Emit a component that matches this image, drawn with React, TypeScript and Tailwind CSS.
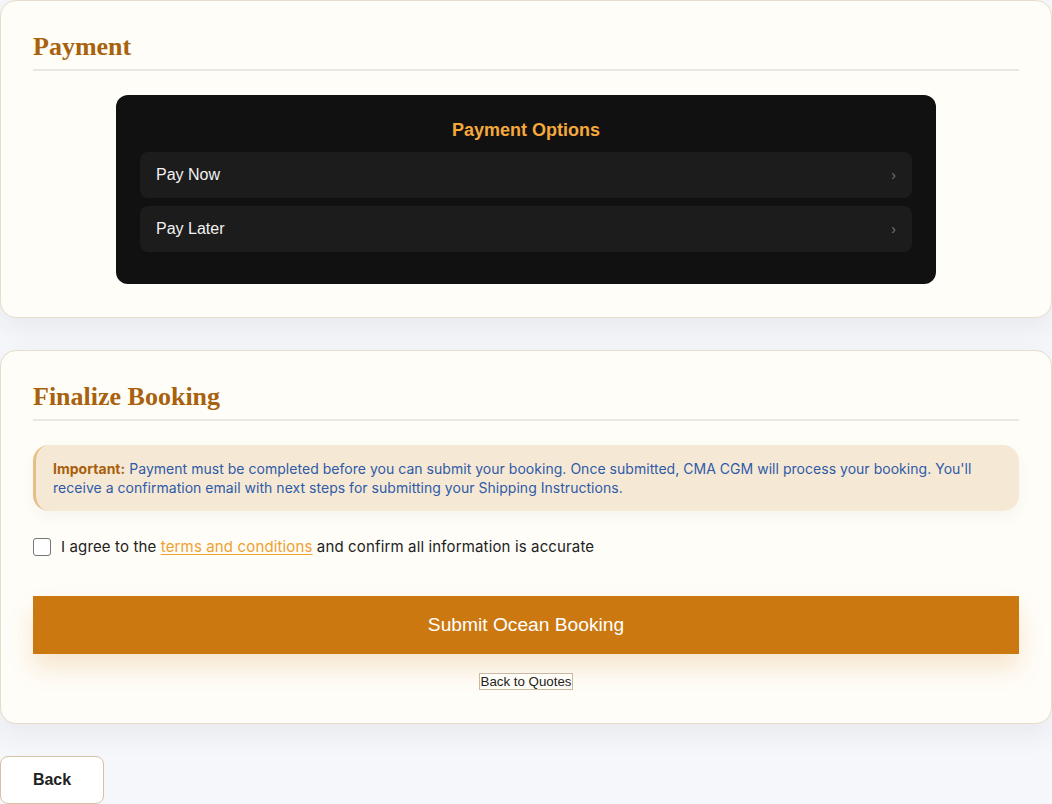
const serif = { fontFamily: '"Liberation Serif", "Times New Roman", serif' };

function SectionCard({
  title,
  className,
  children,
}: {
  title: string;
  className: string;
  children: React.ReactNode;
}) {
  return (
    <section
      className={`rounded-2xl border border-[#e6dccb] bg-[#fffdf8] px-8 pt-8 shadow-[0_10px_28px_rgba(30,40,60,0.07)] ${className}`}
    >
      <h2
        className="border-b-2 border-[#ebe7df] pb-2 text-[26px] leading-[28px] font-bold text-[#a8620e]"
        style={serif}
      >
        {title}
      </h2>
      {children}
    </section>
  );
}

export default function App() {
  const options = ["Pay Now", "Pay Later"];

  return (
    <div className="min-h-[804px] bg-[#f6f7fb] font-['Inter',sans-serif]">
      <div className="flex flex-col gap-8">
        <SectionCard title="Payment" className="pb-[32.5px]">
          <div className="mx-auto mt-6 max-w-[820px] rounded-xl bg-[#111111] px-6 pt-[23px] pb-8 font-['Liberation_Sans',Arial,sans-serif]">
            <h3 className="mb-[10px] text-center text-[18px] leading-[24px] font-bold text-[#f5a83c]">
              Payment Options
            </h3>
            <div className="flex flex-col gap-2">
              {options.map((o) => (
                <button
                  key={o}
                  className="flex h-[46px] items-center justify-between rounded-lg bg-[#1c1c1c] pr-[16px] pl-4 text-left text-[16px] text-[#f2f2f2]"
                >
                  <span>{o}</span>
                  <span className="text-[14px] text-[#777]">›</span>
                </button>
              ))}
            </div>
          </div>
        </SectionCard>

        <SectionCard title="Finalize Booking" className="pb-[33px]">
          <div className="mt-6 rounded-2xl border-l-[3px] border-[#e6bf88] bg-[#f5e9d5] py-[14px] pr-5 pl-[17px] text-[14px] leading-[19px] tracking-[0.03px] text-[#2f5aa8] shadow-[0_6px_16px_rgba(0,0,0,0.04)]">
            <strong className="font-bold text-[#a8600c]">Important:</strong> Payment must be completed before you can
            submit your booking. Once submitted, CMA CGM will process your booking. You'll receive a confirmation email
            with next steps for submitting your Shipping Instructions.
          </div>

          <label className="mt-[25px] flex items-center gap-[10px] text-[15px] tracking-[0.14px] text-[#222]">
            <span className="h-[18px] w-[18px] rounded-[3px] border border-[#767676] bg-white" />
            <span>
              I agree to the{" "}
              <a className="text-[#f0a030] underline underline-offset-2">terms and conditions</a> and confirm all
              information is accurate
            </span>
          </label>

          <button className="mt-[38px] h-[58px] w-full bg-[#cb7811] font-['Liberation_Sans',Arial,sans-serif] text-[19.2px] text-white shadow-[0_14px_24px_rgba(203,120,17,0.18)]">
            Submit Ocean Booking
          </button>

          <div className="mt-[19px] flex justify-center">
            <button className="border border-[#c8b9a0] bg-[#fffdf8] px-[1px] font-['Liberation_Sans',Arial,sans-serif] text-[13.3px] leading-[15px] text-[#222]">
              Back to Quotes
            </button>
          </div>
        </SectionCard>

        <div>
          <button className="h-[48px] w-[104px] rounded-lg border border-[#d3c3a6] bg-white font-['Liberation_Sans',Arial,sans-serif] text-[16px] font-bold text-[#222]">
            Back
          </button>
        </div>
      </div>
    </div>
  );
}
